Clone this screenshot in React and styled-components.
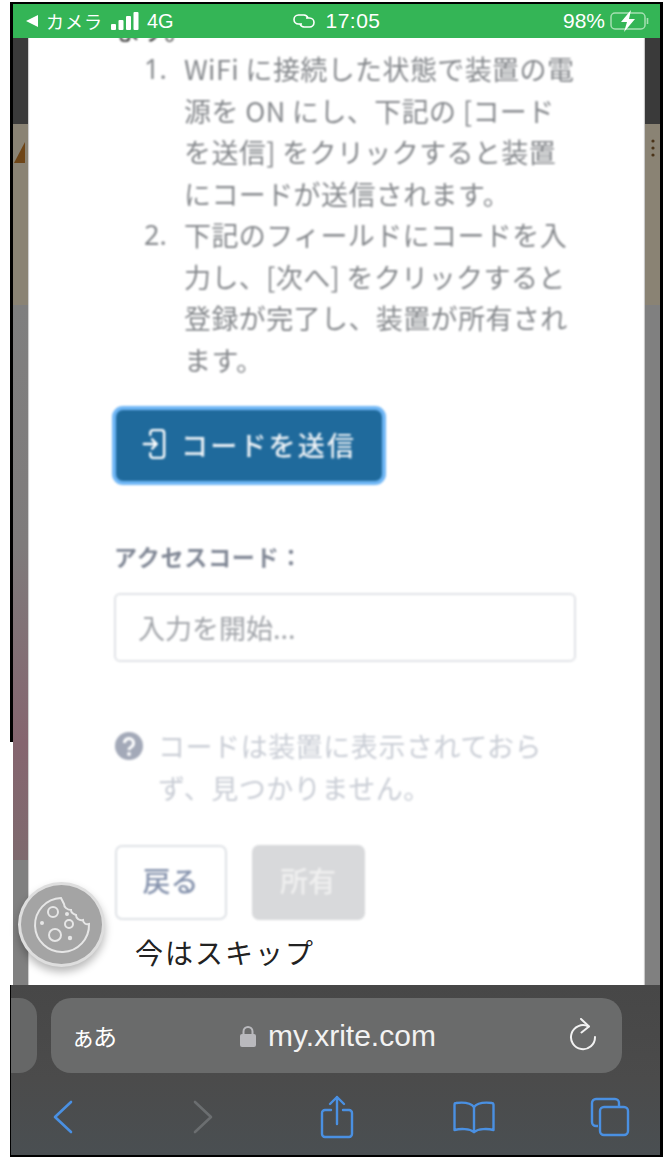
import React from 'react';
import styled, { createGlobalStyle } from 'styled-components';

const GlobalStyle = createGlobalStyle`
  html, body {
    margin: 0;
    padding: 0;
    background: #fff;
  }
  body {
    font-family: "Noto Sans CJK JP", "Noto Sans", sans-serif;
  }
`;

const Page = styled.div`
  width: 664px;
  height: 1159px;
  box-sizing: border-box;
  padding: 2px 1px 2px 10px;
  background: #fff;
  position: relative;
  overflow: hidden;
`;

const Phone = styled.div`
  height: 100%;
  box-sizing: border-box;
  display: flex;
  flex-direction: column;
  border-top: 2px solid #000;
  border-right: 3px solid #000;
  border-bottom: 2px solid #000;
`;

/* ステータスバー */
const StatusBar = styled.div`
  height: 34px;
  flex-shrink: 0;
  background: #34b556;
  border-left: 3px solid #000;
  display: grid;
  grid-template-columns: 1fr auto 1fr;
  align-items: center;
  color: #fff;
  font-size: 18px;
  padding: 0 9px 0 12px;
`;

const StatusLeft = styled.div`
  display: flex;
  align-items: center;
`;

const StatusCenter = styled.div`
  display: flex;
  align-items: center;
  gap: 9px;
  font-family: "Liberation Sans", sans-serif;
  font-size: 21px;
  letter-spacing: 0.5px;
  padding-right: 3px;
`;

const StatusRight = styled.div`
  display: flex;
  align-items: center;
  justify-content: flex-end;
  gap: 5px;
  font-family: "Liberation Sans", sans-serif;
  font-size: 21px;
`;

const Carrier = styled.span`
  margin-left: 7px;
  letter-spacing: 1px;
  margin-right: 8px;
`;

const NetworkLabel = styled.span`
  font-family: "Liberation Sans", sans-serif;
  font-size: 20px;
  margin-left: 8px;
`;

/* 中央エリア */
const Viewport = styled.div`
  flex: 1;
  min-height: 0;
  display: flex;
`;

const Gutter = styled.div`
  width: ${p => p.$width}px;
  flex-shrink: 0;
  display: flex;
  flex-direction: column;
`;

const Band = styled.div`
  height: ${p => (p.$height ? `${p.$height}px` : 'auto')};
  flex: ${p => (p.$height ? 'none' : 1)};
  background: ${p => p.$bg};
  border-left: ${p => (p.$edge ? `3px solid ${p.$edge}` : 'none')};
  display: flex;
  flex-direction: column;
  align-items: ${p => p.$align || 'flex-start'};
`;

const BandMark = styled.svg`
  margin-top: ${p => p.$top}px;
  margin-left: ${p => p.$left || 0}px;
`;

const Modal = styled.div`
  flex: 1;
  min-width: 0;
  background: #fff;
  overflow: hidden;
  box-shadow: inset 2px 0 1px -1px #c9c9c9, inset -2px 0 1px -1px #c4c4c4;
`;

const Blurred = styled.div`
  filter: blur(0.9px);
  padding-left: 87px;
`;

const ClippedLine = styled.div`
  margin-top: -28px;
  height: 38px;
  line-height: 38px;
  font-size: 26px;
  color: #333;
`;

const Steps = styled.ol`
  list-style: none;
  margin: 0;
  padding: 0;
  color: #85888c;
  font-size: 27px;
  line-height: 41.5px;
`;

const Step = styled.li`
  display: flex;
`;

const StepNumber = styled.span`
  width: 69px;
  margin-left: 29px;
  margin-right: -29px;
  flex-shrink: 0;
  box-sizing: border-box;
  font-family: "Noto Sans", sans-serif;
`;

const StepText = styled.div`
  white-space: pre-line;
  letter-spacing: 0.4px;
`;

const SendButton = styled.button`
  display: flex;
  align-items: center;
  gap: 15px;
  width: 274px;
  height: 79px;
  margin: 26px 0 0 -3px;
  padding: 0 0 3px 26px;
  box-sizing: border-box;
  background: #1f6a9c;
  border: 4px solid #6fb6f5;
  border-radius: 11px;
  color: #eef3f7;
  font-family: inherit;
  font-size: 27px;
  letter-spacing: 2.2px;
  font-weight: 500;
`;

const FieldLabel = styled.label`
  display: block;
  margin-top: 56px;
  margin-left: -1px;
  line-height: 30px;
  font-size: 23px;
  letter-spacing: 0.8px;
  font-weight: 700;
  color: #808795;
`;

const CodeInput = styled.div`
  width: 462px;
  height: 69px;
  margin: 22px 0 0 -1px;
  box-sizing: border-box;
  border: 2px solid #e1e3e7;
  border-radius: 6px;
  display: flex;
  align-items: center;
  padding-left: 22px;
  font-size: 27px;
  color: #a1a4a9;
`;

const Help = styled.div`
  margin-top: 63px;
  display: flex;
  gap: 15px;
  color: #c9cdd5;
  font-size: 27px;
  letter-spacing: 0.55px;
  line-height: 42px;
`;

const HelpIcon = styled.svg`
  flex-shrink: 0;
  margin-top: 7px;
`;

const HelpText = styled.div`
  white-space: pre-line;
`;

const Actions = styled.div`
  margin-top: 36px;
  display: flex;
  gap: 25px;
`;

const ActionButton = styled.button`
  width: ${p => (p.$muted ? 113 : 112)}px;
  height: 75px;
  box-sizing: border-box;
  border-radius: 7px;
  border: 2px solid ${p => (p.$muted ? '#d8d9db' : '#dfe2e6')};
  background: ${p => (p.$muted ? '#d8d9db' : '#fff')};
  color: ${p => (p.$muted ? '#f0f0f0' : '#8794ae')};
  font-family: inherit;
  font-size: 28px;
  font-weight: 500;
  padding: 0 1px 5px 0;
`;

const SkipLink = styled.div`
  margin: 12px 0 0 107px;
  line-height: 40px;
  font-size: 28px;
  letter-spacing: 2px;
  color: #222;
`;

/* Safari ツールバー */
const Toolbar = styled.div`
  height: 170px;
  flex-shrink: 0;
  background: linear-gradient(180deg, #474747 0%, #4b4b4b 55%, #4a4f52 100%);
  border-left: 1px solid #000;
  display: flex;
  flex-direction: column;
`;

const AddressRow = styled.div`
  display: flex;
  gap: 14px;
  margin-top: 13px;
`;

const TabStub = styled.div`
  width: 26px;
  height: 75px;
  background: #666767;
  border-radius: 0 18px 18px 0;
`;

const AddressBar = styled.div`
  width: 571px;
  height: 75px;
  background: #6a6b6b;
  border-radius: 20px;
  display: grid;
  grid-template-columns: 1fr auto 1fr;
  align-items: center;
  padding: 0 22px;
  box-sizing: border-box;
  color: #fff;
`;

const ReaderButton = styled.span`
  font-size: 24px;
  line-height: 1;
  margin-left: -2px;
  letter-spacing: -2px;
`;

const Domain = styled.div`
  display: flex;
  align-items: center;
  gap: 12px;
  font-family: "Liberation Sans", sans-serif;
  font-size: 30px;
  color: #f2f2f2;
  padding-left: 3px;
`;

const ReloadSlot = styled.div`
  display: flex;
  justify-content: flex-end;
  padding-right: 3px;
`;

const NavRow = styled.div`
  margin-top: 22px;
  display: flex;
  align-items: center;
  padding-left: 42px;
  height: 44px;
`;

const NavIcon = styled.svg`
  flex-shrink: 0;
  margin-left: ${p => p.$gap || 0}px;
`;

const CookieButton = styled.div`
  position: absolute;
  left: 18px;
  top: 882px;
  width: 87px;
  height: 85px;
  box-sizing: border-box;
  border-radius: 50%;
  background: #a4a4a4;
  border: 3px solid #dedede;
  box-shadow: 0 5px 9px rgba(0, 0, 0, 0.28);
  display: flex;
  align-items: center;
  justify-content: center;
`;

const stepItems = [
  { n: '1.', text: 'WiFi に接続した状態で装置の電\n源を ON にし、下記の [コード\nを送信] をクリックすると装置\nにコードが送信されます。' },
  { n: '2.', text: '下記のフィールドにコードを入\n力し、[次へ] をクリックすると\n登録が完了し、装置が所有され\nます。' },
];

const blue = '#4a90e2';

const App = () => (
  <>
    <GlobalStyle />
    <Page>
      <Phone>
        <StatusBar>
          <StatusLeft>
            <svg width="14" height="14" viewBox="0 0 14 14">
              <path d="M13 1v12L1 7z" fill="#fff" />
            </svg>
            <Carrier>カメラ</Carrier>
            <svg width="28" height="20" viewBox="0 0 28 20" fill="#fff">
              <rect x="0" y="13" width="5" height="6" rx="1" />
              <rect x="7.5" y="9" width="5" height="10" rx="1" />
              <rect x="15" y="5" width="5" height="14" rx="1" />
              <rect x="22.5" y="1" width="5" height="18" rx="1" />
            </svg>
            <NetworkLabel>4G</NetworkLabel>
          </StatusLeft>
          <StatusCenter>
            <svg width="24" height="16" viewBox="0 0 24 16" fill="none" stroke="#fff" strokeWidth="1.6">
              <path d="M10 11H6.5a4.5 4.5 0 0 1 0-9H12a4.5 4.5 0 0 1 4 3" />
              <path d="M14 5h3.500a4.500 4.500 0 0 1 0 9H12a4.500 4.500 0 0 1-4-3" />
            </svg>
            17:05
          </StatusCenter>
          <StatusRight>
            98%
            <svg width="41" height="22" viewBox="0 0 41 22" fill="none">
              <rect x="1" y="3" width="34" height="16" rx="4" stroke="#a5e0b3" strokeWidth="1.5" />
              <rect x="3" y="5" width="30" height="12" rx="2" fill="#34b556" />
              <path d="M37.5 8v6" stroke="#a5e0b3" strokeWidth="1.6" />
              <path d="M21 0 11 12h6l-3 10 11-13h-6z" fill="#fff" />
            </svg>
          </StatusRight>
        </StatusBar>

        <Viewport>
          <Gutter $width={18}>
            <Band $height={86} $bg="#3a3a3a" $edge="#000" />
            <Band $height={181} $bg="#8a8374" $edge="#000">
              <BandMark $top={18} $left={1} width="12" height="22" viewBox="0 0 12 22">
                <path d="M11 0v21H0z" fill="#6e4517" />
              </BandMark>
            </Band>
            <Band $height={437} $bg="linear-gradient(180deg, #7f7f7f 0%, #7e7b7b 55%, #85656f 100%)" $edge="#000" />
            <Band $height={118} $bg="linear-gradient(180deg, #85656f 0%, #7e6a6e 100%)" $edge="#fff" />
            <Band $bg="#808080" $edge="#fff" />
          </Gutter>

          <Modal>
            <Blurred>
              <ClippedLine>ます。</ClippedLine>
              <Steps>
                {stepItems.map(item => (
                  <Step key={item.n}>
                    <StepNumber>{item.n}</StepNumber>
                    <StepText>{item.text}</StepText>
                  </Step>
                ))}
              </Steps>
              <SendButton>
                <svg width="24" height="34" viewBox="0 0 26 34" fill="none" stroke="#fff" strokeWidth="2.6" strokeLinecap="round" strokeLinejoin="round">
                  <path d="M9 7V5a3 3 0 0 1 3-3h9a3 3 0 0 1 3 3v24a3 3 0 0 1-3 3h-9a3 3 0 0 1-3-3v-2" />
                  <path d="M2 17h14M11 12l5 5-5 5" />
                </svg>
                コードを送信
              </SendButton>
              <FieldLabel>アクセスコード：</FieldLabel>
              <CodeInput>入力を開始...</CodeInput>
              <Help>
                <HelpIcon width="28" height="28" viewBox="0 0 28 28">
                  <circle cx="14" cy="14" r="14" fill="#a3a9b8" />
                  <path d="M9.5 11a4.500 4.500 0 1 1 7 3.700c-1.600 1-2.500 1.800-2.500 3.300" fill="none" stroke="#fff" strokeWidth="3" />
                  <circle cx="14" cy="22" r="1.900" fill="#fff" />
                </HelpIcon>
                <HelpText>{'コードは装置に表示されておら\nず、見つかりません。'}</HelpText>
              </Help>
              <Actions>
                <ActionButton>戻る</ActionButton>
                <ActionButton $muted>所有</ActionButton>
              </Actions>
            </Blurred>
            <SkipLink>今はスキップ</SkipLink>
          </Modal>

          <Gutter $width={15}>
            <Band $height={86} $bg="#3a3a3a" />
            <Band $height={181} $bg="#8a8374" $align="center">
              <BandMark $top={14} width="6" height="20" viewBox="0 0 6 20" fill="#4a3318">
                <circle cx="3" cy="3" r="1.600" />
                <circle cx="3" cy="10" r="1.600" />
                <circle cx="3" cy="17" r="1.600" />
              </BandMark>
            </Band>
            <Band $bg="#808080" />
          </Gutter>
        </Viewport>

        <Toolbar>
          <AddressRow>
            <TabStub />
            <AddressBar>
              <ReaderButton>ぁあ</ReaderButton>
              <Domain>
                <svg width="16" height="22" viewBox="0 0 16 22" fill="none">
                  <path d="M3.500 10V6.500a4.500 4.500 0 0 1 9 0V10" stroke="#b9b9bd" strokeWidth="2" />
                  <rect x="0" y="9" width="16" height="13" rx="2" fill="#b9b9bd" />
                </svg>
                my.xrite.com
              </Domain>
              <ReloadSlot>
                <svg width="28" height="36" viewBox="0 0 28 36" fill="none" stroke="#f2f2f2" strokeWidth="2" strokeLinecap="round" strokeLinejoin="round">
                  <path d="M19.500 8.500A12 12 0 1 0 26 19" />
                  <path d="M12 1l8 7.500-7.500 6" />
                </svg>
              </ReloadSlot>
            </AddressBar>
          </AddressRow>
          <NavRow>
            <NavIcon width="20" height="34" viewBox="0 0 20 34" fill="none" stroke={blue} strokeWidth="2.6" strokeLinecap="round" strokeLinejoin="round">
              <path d="M18 2 2 17l16 15" />
            </NavIcon>
            <NavIcon $gap={120} width="20" height="34" viewBox="0 0 20 34" fill="none" stroke="#6b6e70" strokeWidth="2.6" strokeLinecap="round" strokeLinejoin="round">
              <path d="M2 2l16 15L2 32" />
            </NavIcon>
            <NavIcon $gap={107} width="34" height="44" viewBox="0 0 34 44" fill="none" stroke={blue} strokeWidth="2.4" strokeLinecap="round" strokeLinejoin="round">
              <path d="M11 15H5a3 3 0 0 0-3 3v21a3 3 0 0 0 3 3h24a3 3 0 0 0 3-3V18a3 3 0 0 0-3-3h-6" />
              <path d="M17 29V2M10 9l7-7 7 7" />
            </NavIcon>
            <NavIcon $gap={99} width="42" height="34" viewBox="0 0 42 34" fill="none" stroke={blue} strokeWidth="2.4" strokeLinecap="round" strokeLinejoin="round">
              <path d="M21 7C18 3 12 2 3 3c-1 0-1.500 1-1.500 2v25c6-1.500 15-1.500 19.500 2 4.500-3.500 13.500-3.500 19.500-2V5c0-1-.5-2-1.500-2-9-1-15 0-18 4z" />
              <path d="M21 7v25" />
            </NavIcon>
            <NavIcon $gap={95} width="40" height="40" viewBox="0 0 40 40" fill="none" stroke={blue} strokeWidth="2.4" strokeLinejoin="round">
              <path d="M8 29H6a4 4 0 0 1-4-4V6a4 4 0 0 1 4-4h19a4 4 0 0 1 4 4v3" />
              <rect x="10" y="10" width="28" height="28" rx="4" />
            </NavIcon>
          </NavRow>
        </Toolbar>
      </Phone>

      <CookieButton>
        <svg width="62" height="62" viewBox="0 0 62 62" fill="none" stroke="#e6e6e6" strokeWidth="2">
          <path d="M30 4a27 27 0 1 0 28 26c-3 1-6-1-6-4-4 1-7-2-7-5-3-1-5-3-5-5-4 0-7-3-7-6-1-2-2-4-3-6z" />
          <circle cx="22" cy="18" r="5" />
          <circle cx="24" cy="41" r="6" />
          <circle cx="38" cy="30" r="4" />
          <circle cx="36" cy="20" r="2" fill="#e6e6e6" stroke="none" />
          <circle cx="11" cy="29" r="2" fill="#e6e6e6" stroke="none" />
          <circle cx="39" cy="44" r="2.200" fill="#e6e6e6" stroke="none" />
        </svg>
      </CookieButton>
    </Page>
  </>
);

export default App;
